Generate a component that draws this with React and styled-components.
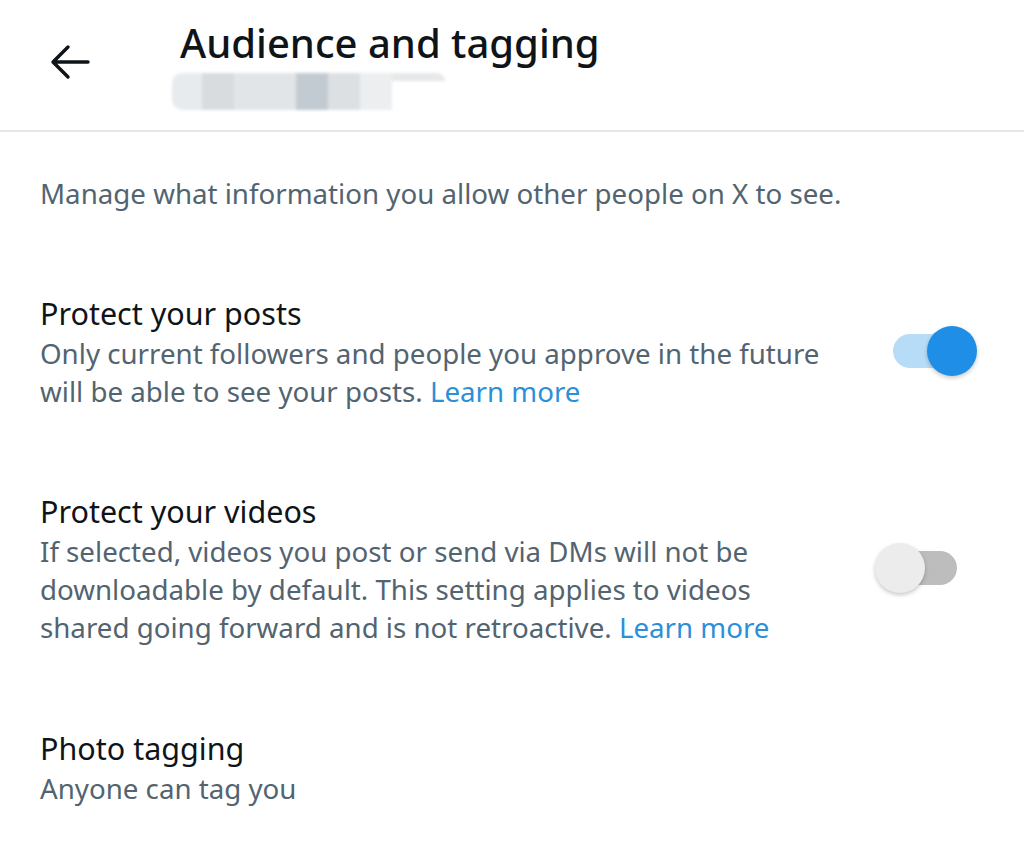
import React from 'react';
import styled, { createGlobalStyle } from 'styled-components';

const GlobalStyle = createGlobalStyle`
  html, body {
    margin: 0;
    padding: 0;
    background: #ffffff;
    font-family: 'Noto Sans', 'Open Sans', sans-serif;
  }
`;

const Page = styled.div`
  width: 1024px;
  height: 868px;
  background: #ffffff;
  overflow: hidden;
`;

const Header = styled.header`
  height: 130px;
  display: flex;
  align-items: flex-start;
  border-bottom: 2px solid #e7e7e7;
`;

const BackButton = styled.div`
  width: 44px;
  height: 44px;
  margin: 40px 0 0 48px;
  display: flex;
  align-items: center;
  justify-content: center;
`;

const HeaderText = styled.div`
  margin: 16px 0 0 88px;
  display: flex;
  flex-direction: column;
`;

const Title = styled.h1`
  margin: 0;
  font-size: 40px;
  line-height: 54px;
  font-weight: 500;
  color: #0f1419;
`;

const Blurred = styled.div`
  display: flex;
  height: 37px;
  width: 274px;
  margin: 3px 0 0 -8px;
  border-radius: 10px;
  overflow: hidden;
  filter: blur(1.5px);
`;

const BlurBlock = styled.div`
  width: ${(p) => p.w}px;
  background: ${(p) => p.c};
  height: ${(p) => p.h || 37}px;
`;

const Content = styled.main`
  padding: 42px 48px 0 40px;
`;

const Intro = styled.p`
  margin: 0;
  font-size: 27.7px;
  line-height: 38px;
  color: #536471;
`;

const Row = styled.section`
  display: flex;
  align-items: center;
  justify-content: space-between;
  margin-top: ${(p) => p.gap}px;
`;

const TextBlock = styled.div`
  width: 790px;
`;

const RowTitle = styled.div`
  font-size: 30.5px;
  line-height: 42px;
  color: #0f1419;
`;

const RowDesc = styled.div`
  font-size: 27.7px;
  line-height: 38px;
  color: #536471;
`;

const Link = styled.span`
  color: #2b90d9;
`;

const Toggle = styled.div`
  position: relative;
  width: 84px;
  height: 52px;
  display: flex;
  align-items: center;
`;

const Track = styled.div`
  margin-left: ${(p) => (p.on ? 1 : 3)}px;
  width: 62px;
  height: 34px;
  border-radius: 17px;
  background: ${(p) => (p.on ? '#b6dcf7' : '#bdbdbd')};
`;

const Knob = styled.div`
  position: absolute;
  top: 1px;
  left: ${(p) => (p.on ? 35 : -17)}px;
  width: 50px;
  height: 50px;
  border-radius: 50%;
  background: ${(p) => (p.on ? '#1f8ee6' : '#ececec')};
  box-shadow: 0 2px 4px rgba(0, 0, 0, 0.22);
`;

function Switch({ on }) {
  return (
    <Toggle>
      <Track on={on} />
      <Knob on={on} />
    </Toggle>
  );
}

export default function App() {
  return (
    <Page>
      <GlobalStyle />
      <Header>
        <BackButton>
          <svg width="40" height="36" viewBox="0 0 40 36" fill="none">
            <path d="M38 18H4M18 3L3 18l15 15" stroke="#0f1419" strokeWidth="3.4" strokeLinecap="round" strokeLinejoin="round" />
          </svg>
        </BackButton>
        <HeaderText>
          <Title>Audience and tagging</Title>
          <Blurred>
            <BlurBlock w={30} c="#e8ebee" />
            <BlurBlock w={32} c="#d8dcdf" />
            <BlurBlock w={62} c="#e2e5e7" />
            <BlurBlock w={32} c="#c3cbd2" />
            <BlurBlock w={32} c="#dde0e3" />
            <BlurBlock w={32} c="#eceef0" />
            <BlurBlock w={54} c="#e6e8ea" h={8} />
          </Blurred>
        </HeaderText>
      </Header>
      <Content>
        <Intro>Manage what information you allow other people on X to see.</Intro>
        <Row gap={80}>
          <TextBlock>
            <RowTitle>Protect your posts</RowTitle>
            <RowDesc>
              Only current followers and people you approve in the future will be able to see your posts.{' '}
              <Link>Learn more</Link>
            </RowDesc>
          </TextBlock>
          <Switch on />
        </Row>
        <Row gap={80}>
          <TextBlock>
            <RowTitle>Protect your videos</RowTitle>
            <RowDesc>
              If selected, videos you post or send via DMs will not be downloadable by default. This setting applies to videos shared going forward and is not retroactive.{' '}
              <Link>Learn more</Link>
            </RowDesc>
          </TextBlock>
          <Switch />
        </Row>
        <Row gap={81}>
          <TextBlock>
            <RowTitle>Photo tagging</RowTitle>
            <RowDesc>Anyone can tag you</RowDesc>
          </TextBlock>
        </Row>
      </Content>
    </Page>
  );
}
